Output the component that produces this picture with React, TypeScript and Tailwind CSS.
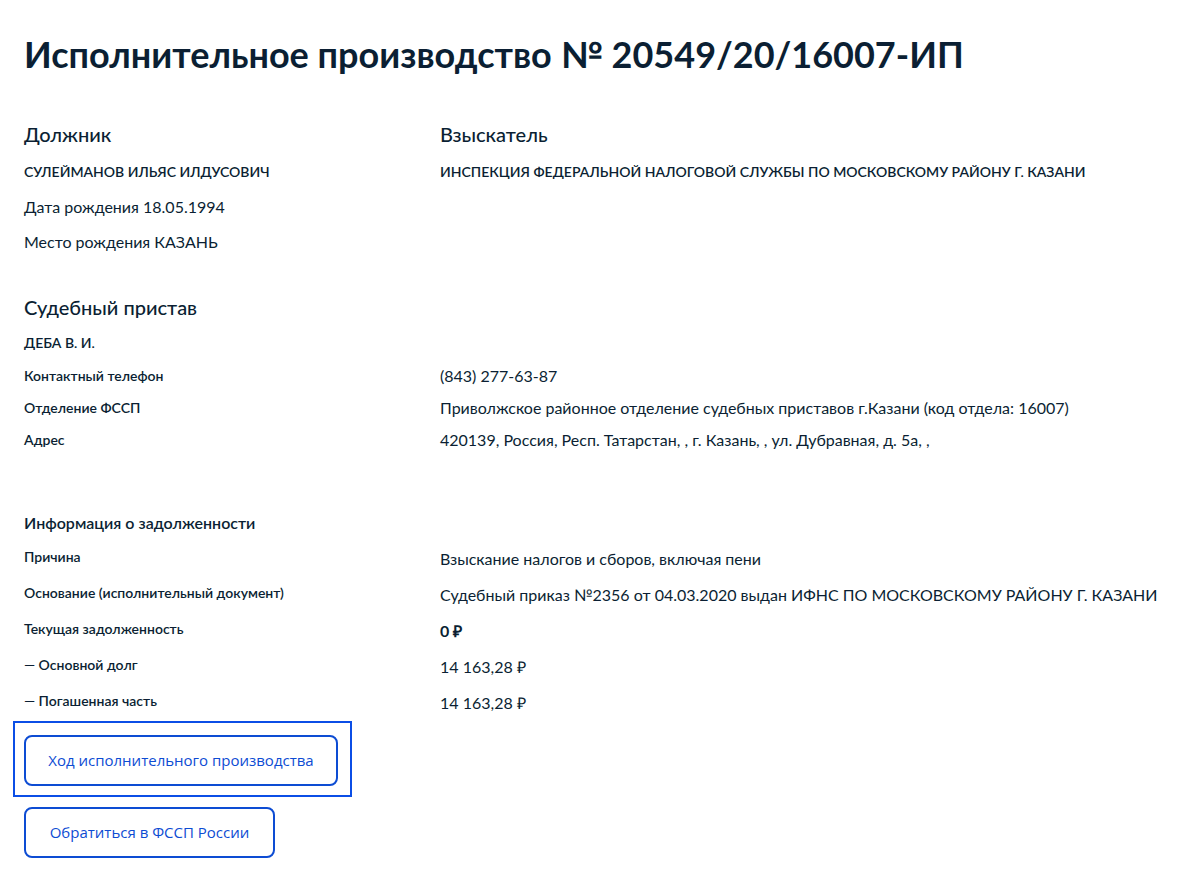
import React from 'react';

const Row: React.FC<{ label: string; children: React.ReactNode; bold?: boolean }> = ({ label, children, bold }) => (
    <div className="flex h-9 items-start">
        <div className="w-[416px] shrink-0 text-[14px] font-semibold leading-6">{label}</div>
        <div className={bold ? 'pt-[2px] text-[16px] font-bold leading-6' : 'pt-[2px] text-[16px] leading-6'}>{children}</div>
    </div>
);

const InfoRow: React.FC<{ label: string; children: React.ReactNode }> = ({ label, children }) => (
    <div className="flex h-8 items-start">
        <div className="w-[416px] shrink-0 text-[14px] font-semibold leading-6">{label}</div>
        <div className="text-[16px] leading-6">{children}</div>
    </div>
);

export default function App() {
    return (
        <div className="min-h-[879px] bg-white text-[#0b1f33] px-6 pt-[30px]" style={{ fontFamily: 'Lato, "Open Sans", sans-serif' }}>
            <h1 className="text-[36px] font-bold leading-[48px]">Исполнительное производство № 20549/20/16007-ИП</h1>

            <div className="mt-[42px] flex">
                <div className="w-[416px] shrink-0">
                    <h2 className="text-[20px] font-medium leading-7">Должник</h2>
                    <div className="mt-[14px] text-[14px] font-semibold leading-5">СУЛЕЙМАНОВ ИЛЬЯС ИЛДУСОВИЧ</div>
                    <div className="mt-[13px] text-[16px] leading-6">Дата рождения 18.05.1994</div>
                    <div className="mt-[11px] text-[16px] leading-6">Место рождения КАЗАНЬ</div>
                </div>
                <div>
                    <h2 className="text-[20px] font-medium leading-7">Взыскатель</h2>
                    <div className="mt-[14px] text-[14px] font-semibold leading-5">ИНСПЕКЦИЯ ФЕДЕРАЛЬНОЙ НАЛОГОВОЙ СЛУЖБЫ ПО МОСКОВСКОМУ РАЙОНУ Г. КАЗАНИ</div>
                </div>
            </div>

            <h2 className="mt-[39px] text-[20px] font-medium leading-7">Судебный пристав</h2>
            <div className="mt-[12px] text-[14px] font-semibold leading-5">ДЕБА В. И.</div>
            <div className="mt-[11px] flex flex-col">
                <InfoRow label="Контактный телефон">(843) 277-63-87</InfoRow>
                <InfoRow label="Отделение ФССП">Приволжское районное отделение судебных приставов г.Казани (код отдела: 16007)</InfoRow>
                <InfoRow label="Адрес">420139, Россия, Респ. Татарстан, , г. Казань, , ул. Дубравная, д. 5а, ,</InfoRow>
            </div>

            <h3 className="mt-[51px] text-[16px] font-semibold leading-6">Информация о задолженности</h3>
            <div className="mt-[10px] flex flex-col">
                <Row label="Причина">Взыскание налогов и сборов, включая пени</Row>
                <Row label="Основание (исполнительный документ)">Судебный приказ №2356 от 04.03.2020 выдан ИФНС ПО МОСКОВСКОМУ РАЙОНУ Г. КАЗАНИ</Row>
                <Row label="Текущая задолженность" bold>0 ₽</Row>
                <Row label="— Основной долг">14 163,28 ₽</Row>
                <Row label="— Погашенная часть">14 163,28 ₽</Row>
            </div>

            <div className="-mt-1 -ml-[11px] flex flex-col items-start gap-[10px]">
                <div className="border-2 border-[#0b4ee6] pl-[9px] pr-[12px] pt-[12px] pb-[9px]">
                    <button className="h-[51px] w-[314px] rounded-lg border-2 border-[#0d4cd3] text-[15px] text-[#0d4cd3]" style={{ fontFamily: '"Open Sans", sans-serif' }}>
                        Ход исполнительного производства
                    </button>
                </div>
                <button className="ml-[11px] h-[51px] w-[251px] rounded-lg border-2 border-[#0d4cd3] text-[15px] text-[#0d4cd3]" style={{ fontFamily: '"Open Sans", sans-serif' }}>
                    Обратиться в ФССП России
                </button>
            </div>
        </div>
    );
}
